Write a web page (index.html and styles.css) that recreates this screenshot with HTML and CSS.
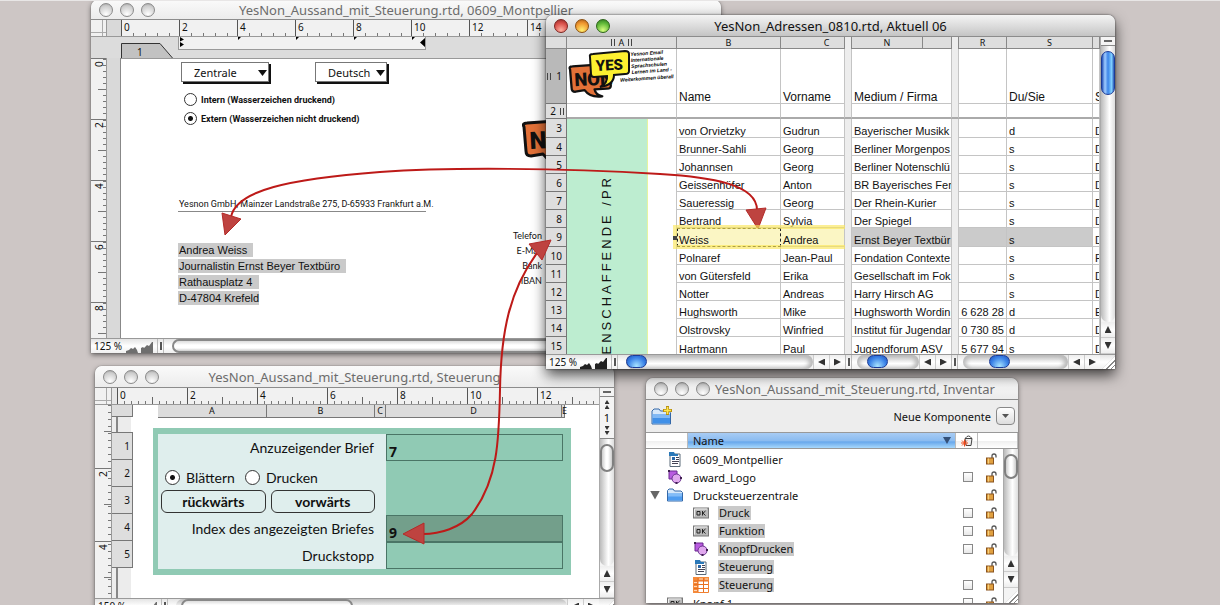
FILE: index.html
```html
<!DOCTYPE html>
<html lang="de">
<head>
<meta charset="utf-8">
<title>YesNon Aussand</title>
<link rel="stylesheet" href="styles.css">
</head>
<body>
<svg class="sprite" aria-hidden="true">
  <symbol id="hills" viewBox="0 0 28 12"><path d="M0 12V10L3 9 5 7 7 8 9 6 11 9 12 12ZM15 12V7L17 6 18 7 21 4 23 5 26 1H27V12Z"/></symbol>
  <symbol id="doc" viewBox="0 0 14 16"><path d="M2 3H12V15.500H2Z" fill="#fff" stroke="#5a6a78"/><path d="M1 1H6L7 3H10V5H1Z" fill="#2a78b8"/><path d="M4 6h3v3H4z" fill="#2a68a8"/><path d="M8 6.500h3M8 8.500h3M4 10.500h7M4 12.500h6" stroke="#445" fill="none"/></symbol>
  <symbol id="shape" viewBox="0 0 16 16"><path d="M2 2H10V10H2Z" fill="#b95be0" stroke="#6a2890"/><circle cx="9.500" cy="9.500" r="4.500" fill="#e0a8ee" stroke="#6a3090"/><path d="M1 1h2v2H1zM13 8h2v2h-2zM8.500 13h2v2h-2z" fill="#402050"/></symbol>
  <symbol id="folder" viewBox="0 0 16 13"><path d="M.5 12.500V2L2 .5H6L7.500 2.500H14L15.500 4V12.500Z" fill="#d6e8fa" stroke="#3468a8"/><path d="M1 5H15V12H1Z" fill="#4e9cf0"/><path d="M1 5H15V8H1Z" fill="#82bcf8"/></symbol>
  <symbol id="ok" viewBox="0 0 16 11"><rect x=".5" y=".5" width="15" height="10" fill="#b8b8b8" stroke="#777"/><path d="M1.500 9V1.500H14" stroke="#eee" fill="none"/><path d="M4 4H7V7.500H4ZM9.500 3.500V8M12.500 3.500L10 5.700L12.500 8" stroke="#222" fill="none"/></symbol>
  <symbol id="grid" viewBox="0 0 16 16"><path d="M.5 .5H15.500V15.500H.5Z" fill="#fff" stroke="#f08030"/><path d="M0 0H16V4H0ZM0 0H5V16H0Z" fill="#f58a3a"/><path d="M1 4H15M1 7.500H15M1 11.500H15M5 1V15M10.500 1V15" stroke="#e87020" fill="none"/><path d="M1 5.500H4M1 9.500H4M1 13.500H4M6 2H10M12 2h3" stroke="#ffd8b8" fill="none"/></symbol>
  <symbol id="lock" viewBox="0 0 11 12"><path d="M6 5V3Q6 1 8 1Q10 1 10 3V4.500" stroke="#555" stroke-width="1.300" fill="none"/><rect x=".5" y="5" width="7" height="6" fill="#e0a040" stroke="#8a5420"/><path d="M2.500 5.500V10.500" stroke="#f4d080"/></symbol>
  <symbol id="non" viewBox="0 0 60 46"><path d="M4 8Q2 4 7 4L50 1Q56 0 56 5L57 28Q58 33 52 33L36 34Q37 41 46 43Q30 45 23 35L11 37Q6 37 6 32Z" fill="#e27138" stroke="#111" stroke-width="3" stroke-linejoin="round"/><text class="logo-word" x="10" y="30" transform="rotate(-3 10 30)" font-size="24">NON</text></symbol>
</svg>

<main class="desktop">

  <section class="window win-letter" aria-label="Montpellier">
    <header class="titlebar"><div class="lights"><button aria-label="Schließen"></button><button aria-label="Ablegen"></button><button aria-label="Zoomen"></button></div><h1>YesNon_Aussand_mit_Steuerung.rtd, 0609_Montpellier</h1></header>
    <div class="ruler letter-ruler"><i class="corner"></i><i class="gutter"></i><div class="h-scale"><span>0</span><span>2</span><span>4</span><span>6</span><span>8</span><span>10</span><span>12</span><span>14</span></div></div>
    <div class="tab-row"><i class="corner-fill"></i><div class="page-tab"><svg viewBox="0 0 52 15" aria-hidden="true"><path d="M.5 15V.5H39L51.500 15" /></svg><span>1</span></div><div class="indent"><svg viewBox="0 0 248 13" aria-hidden="true"><path d="M1 0L5 2.500L1 4.500ZM1 5L5 7.500L1 10ZM59 0H62L59 3ZM117 0H120L117 3ZM175 0H178L175 3ZM233 0H236L233 3ZM246 1V10L241 5.500Z"/></svg></div></div>
    <div class="letter-body">
      <div class="v-scale v61"><span>0</span><span>2</span><span>4</span><span>6</span><span>8</span></div>
      <i class="gutter"></i>
      <div class="paper">
        <div class="letter-main">
          <div class="choices"><span class="drop zentrale"><select aria-label="Standort"><option>Zentrale</option></select></span><span class="drop"><select aria-label="Sprache"><option>Deutsch</option></select></span></div>
          <label class="mark"><input type="radio" name="mark">Intern (Wasserzeichen druckend)</label>
          <label class="mark"><input type="radio" name="mark" checked>Extern (Wasserzeichen nicht druckend)</label>
          <p class="sender">Yesnon GmbH, Mainzer Landstraße 275, D-65933 Frankfurt a.M.</p>
          <address><span>Andrea Weiss&nbsp;&nbsp;</span><span>Journalistin Ernst Beyer Textbüro&nbsp;&nbsp;</span><span>Rathausplatz 4&nbsp;&nbsp;</span><span>D-47804 Krefeld</span></address>
        </div>
        <div class="letter-side"><svg class="side-logo" role="img" aria-label="NON"><use href="#non"/></svg><ul><li>Telefon</li><li>E-Mail</li><li>Bank</li><li>IBAN</li></ul></div>
      </div>
    </div>
    <footer class="status"><span>125 %</span><svg class="hills"><use href="#hills"/></svg><i class="grab"></i><div class="track"><i class="pill"></i></div></footer>
  </section>

  <section class="window win-control" aria-label="Steuerung">
    <header class="titlebar"><div class="lights"><button aria-label="Schließen"></button><button aria-label="Ablegen"></button><button aria-label="Zoomen"></button></div><h1>YesNon_Aussand_mit_Steuerung.rtd, Steuerung</h1></header>
    <div class="control-frame">
      <div class="control-left">
        <div class="ruler control-ruler"><i class="corner"></i><i class="gutter"></i><div class="h-scale h70"><span>0</span><span>2</span><span>4</span><span>6</span><span>8</span><span>10</span><span>12</span></div></div>
        <div class="control-body">
          <div class="v-scale v73"><span></span><span>2</span><span>4</span></div>
          <div class="row-heads"><b></b><span>1</span><span>2</span><span>3</span><span>4</span><span>5</span></div>
          <div class="control-page">
            <div class="col-heads"><span>A</span><span>B</span><span>C</span><span>D</span><span>E</span></div>
            <form class="panel">
              <label class="name" for="brief">Anzuzeigender Brief</label><input class="value" id="brief" value="7">
              <div class="modes"><label><input type="radio" name="mode" checked>Blättern</label><label><input type="radio" name="mode">Drucken</label></div><i class="blank"></i>
              <div class="steps"><button type="button">rückwärts</button><button type="button">vorwärts</button></div><i class="blank"></i>
              <label class="name" for="index">Index des angezeigten Briefes</label><input class="value dark" id="index" value="9">
              <label class="name" for="stopp">Druckstopp</label><input class="value" id="stopp" value="">
            </form>
          </div>
        </div>
      </div>
      <div class="v-bar"><button class="split" aria-label="Teilen"></button><div class="pager"><button class="arrow up" aria-label="Erste Seite"></button><button class="arrow up" aria-label="Vorige Seite"></button><span>1</span><button class="arrow down" aria-label="Nächste Seite"></button><button class="arrow down" aria-label="Letzte Seite"></button></div><div class="v-track"><i class="v-thumb"></i></div><button class="arrow up" aria-label="Nach oben"></button><button class="arrow down" aria-label="Nach unten"></button></div>
    </div>
    <footer class="status"><span>150 %</span><svg class="hills"><use href="#hills"/></svg><i class="grab"></i><div class="track short"><i class="pill"></i></div><button class="arrow left" aria-label="Nach links"></button><button class="arrow right" aria-label="Nach rechts"></button><i class="grip"></i></footer>
  </section>

  <section class="window win-inventory" aria-label="Inventar">
    <header class="titlebar"><div class="lights"><button aria-label="Schließen"></button><button aria-label="Ablegen"></button><button aria-label="Zoomen"></button></div><h1>YesNon_Aussand_mit_Steuerung.rtd, Inventar</h1></header>
    <div class="toolbar"><button class="new-folder" aria-label="Neuer Ordner"><svg viewBox="0 0 22 20"><path d="M1 18V5L3 3H8L9.500 5H18L19.500 7V18Z" fill="#d6e8fa" stroke="#3468a8"/><path d="M1.500 8H19V17.500H1.500Z" fill="#4090e8"/><path d="M1.500 8H19V12H1.500Z" fill="#80b8f4"/><path d="M16.500 0V9M12 4.500H21" stroke="#b89010" stroke-width="3"/><path d="M16.500 1V8M13 4.500H20" stroke="#ffe850" stroke-width="1.500"/></svg></button><label for="newcomp">Neue Komponente</label><button id="newcomp" class="menu-button" aria-label="Neue Komponente"></button></div>
    <div class="list-head"><i></i><button class="sort">Name</button><span><svg viewBox="0 0 12 12" aria-label="Papierkorb"><path d="M4 3.500H11L10 10.500H5Z" fill="#eee" stroke="#444"/><path d="M4.500 3Q7.500 -1 10.500 3" fill="none" stroke="#444"/><path d="M0 8H7M1 5.500L6 10.500M3.500 4.500V11.500M6 5.500L1 10.500" stroke="#f04818"/></svg></span><i></i></div>
    <div class="list-body">
      <table class="tree">
        <colgroup><col><col class="c-check"><col class="c-lock"></colgroup>
        <tbody>
        <tr><td><div class="item"><svg><use href="#doc"/></svg>0609_Montpellier</div></td><td></td><td><svg class="lock"><use href="#lock"/></svg></td></tr>
        <tr><td><div class="item"><svg><use href="#shape"/></svg>award_Logo</div></td><td><input type="checkbox" aria-label="award_Logo"></td><td><svg class="lock"><use href="#lock"/></svg></td></tr>
        <tr><td><div class="item open"><button class="twist" aria-label="Zuklappen"></button><svg><use href="#folder"/></svg>Drucksteuerzentrale</div></td><td></td><td><svg class="lock"><use href="#lock"/></svg></td></tr>
        <tr><td><div class="item sub"><svg><use href="#ok"/></svg><mark>Druck</mark></div></td><td><input type="checkbox" aria-label="Druck"></td><td><svg class="lock"><use href="#lock"/></svg></td></tr>
        <tr><td><div class="item sub"><svg><use href="#ok"/></svg><mark>Funktion</mark></div></td><td><input type="checkbox" aria-label="Funktion"></td><td><svg class="lock"><use href="#lock"/></svg></td></tr>
        <tr><td><div class="item sub"><svg><use href="#shape"/></svg><mark>KnopfDrucken</mark></div></td><td><input type="checkbox" aria-label="KnopfDrucken"></td><td><svg class="lock"><use href="#lock"/></svg></td></tr>
        <tr><td><div class="item sub"><svg><use href="#doc"/></svg><mark>Steuerung</mark></div></td><td></td><td><svg class="lock"><use href="#lock"/></svg></td></tr>
        <tr><td><div class="item sub"><svg><use href="#grid"/></svg><mark>Steuerung</mark></div></td><td><input type="checkbox" aria-label="Steuerung"></td><td><svg class="lock"><use href="#lock"/></svg></td></tr>
        <tr><td><div class="item"><svg><use href="#ok"/></svg>Knopf 1</div></td><td><input type="checkbox" aria-label="Knopf 1"></td><td><svg class="lock"><use href="#lock"/></svg></td></tr>
        </tbody>
      </table>
      <div class="v-bar"><div class="v-track"><i class="v-thumb"></i></div><button class="arrow up" aria-label="Nach oben"></button><button class="arrow down" aria-label="Nach unten"></button><i class="grip"></i></div>
    </div>
  </section>

  <section class="window win-sheet active" aria-label="Adressen">
    <header class="titlebar"><div class="lights"><button class="red" aria-label="Schließen"></button><button class="amber" aria-label="Ablegen"></button><button class="green" aria-label="Zoomen"></button></div><h1>YesNon_Adressen_0810.rtd, Aktuell 06</h1></header>
    <div class="sheet-body">
      <div class="sheet-view">
      <table class="sheet">
        <colgroup><col class="w-no"><col class="w-a"><col class="w-b"><col class="w-c"><col class="w-gap"><col class="w-n"><col class="w-o"><col class="w-gap"><col class="w-r"><col class="w-s"><col class="w-t"></colgroup>
        <thead>
          <tr class="letters"><th></th><th class="picked"><i class="bars"></i>A<i class="bars"></i></th><th>B</th><th class="late">C</th><th class="gap"></th><th>N</th><th></th><th class="gap"></th><th>R</th><th>S</th><th></th></tr>
          <tr class="titles"><th class="picked"><i class="bars"></i>1</th>
            <td><svg class="logo" viewBox="0 0 109 52" role="img" aria-label="YES NON"><use href="#non" x="0" y="14" width="46" height="36"/><path d="M23 8Q22 5 26 5L58 2Q62 2 62 5L62 22Q62 25 58 25L47 26Q47 36 33 38Q41 34 40 27L27 28Q24 28 24 25Z" fill="#fdf030" stroke="#111" stroke-width="2"/><text class="logo-word" x="29" y="22" transform="rotate(-3 29 22)" font-size="15">YES</text><g class="tagline" transform="rotate(-4 64 14)"><text x="64" y="7">Yesnon Email</text><text x="64" y="13">Internationale</text><text x="64" y="19">Sprachschulen</text><text x="64" y="25">Lernen im Land -</text><text x="52" y="32">Weiterkommen überall</text></g></svg></td>
            <th>Name</th><th>Vorname</th><td class="gap"></td><th colspan="2">Medium / Firma</th><td class="gap"></td><td></td><th>Du/Sie</th><th>S</th></tr>
          <tr class="spacer"><th>2<i class="bars"></i></th><td></td><td></td><td></td><td class="gap"></td><td colspan="2"></td><td class="gap"></td><td></td><td></td><td></td></tr>
        </thead>
        <tbody>
          <tr><th>3</th><td class="group" rowspan="13"><div><span>ENSCHAFFENDE /PR</span></div></td><td>von Orvietzky</td><td>Gudrun</td><td class="gap"></td><td colspan="2">Bayerischer Musikk</td><td class="gap"></td><td></td><td>d</td><td>D</td></tr>
          <tr><th>4</th><td>Brunner-Sahli</td><td>Georg</td><td class="gap"></td><td colspan="2">Berliner Morgenpos</td><td class="gap"></td><td></td><td>s</td><td>D</td></tr>
          <tr><th>5</th><td>Johannsen</td><td>Georg</td><td class="gap"></td><td colspan="2">Berliner Notenschlü</td><td class="gap"></td><td></td><td>s</td><td>D</td></tr>
          <tr><th>6</th><td>Geissenhöfer</td><td>Anton</td><td class="gap"></td><td colspan="2">BR Bayerisches Fer</td><td class="gap"></td><td></td><td>s</td><td>D</td></tr>
          <tr><th>7</th><td>Saueressig</td><td>Georg</td><td class="gap"></td><td colspan="2">Der Rhein-Kurier</td><td class="gap"></td><td></td><td>s</td><td>D</td></tr>
          <tr><th>8</th><td>Bertrand</td><td>Sylvia</td><td class="gap"></td><td colspan="2">Der Spiegel</td><td class="gap"></td><td></td><td>s</td><td>D</td></tr>
          <tr class="current"><th>9</th><td class="cursor"><i class="glow"></i><i class="handle"></i>Weiss</td><td class="near">Andrea</td><td class="gap"></td><td class="sel" colspan="2">Ernst Beyer Textbür</td><td class="gap"></td><td class="sel"></td><td class="sel">s</td><td>D</td></tr>
          <tr><th>10</th><td>Polnaref</td><td>Jean-Paul</td><td class="gap"></td><td colspan="2">Fondation Contexte</td><td class="gap"></td><td></td><td>s</td><td>F</td></tr>
          <tr><th>11</th><td>von Gütersfeld</td><td>Erika</td><td class="gap"></td><td colspan="2">Gesellschaft im Fok</td><td class="gap"></td><td></td><td>s</td><td>D</td></tr>
          <tr><th>12</th><td>Notter</td><td>Andreas</td><td class="gap"></td><td colspan="2">Harry Hirsch AG</td><td class="gap"></td><td></td><td>s</td><td>D</td></tr>
          <tr><th>13</th><td>Hughsworth</td><td>Mike</td><td class="gap"></td><td colspan="2">Hughsworth Wordin</td><td class="gap"></td><td class="tail">6 628 28</td><td>d</td><td>E</td></tr>
          <tr><th>14</th><td>Olstrovsky</td><td>Winfried</td><td class="gap"></td><td colspan="2">Institut für Jugendar</td><td class="gap"></td><td class="tail">0 730 85</td><td>d</td><td>D</td></tr>
          <tr><th>15</th><td>Hartmann</td><td>Paul</td><td class="gap"></td><td colspan="2">Jugendforum ASV</td><td class="gap"></td><td class="tail">5 677 94</td><td>s</td><td>D</td></tr>
        </tbody>
      </table>
      </div>
      <div class="v-bar"><button class="split" aria-label="Teilen"></button><div class="v-track"><i class="v-thumb"></i></div><button class="arrow up" aria-label="Nach oben"></button><button class="arrow down" aria-label="Nach unten"></button></div>
    </div>
    <footer class="status"><div class="pane pane-1"><span>125 %</span><svg class="hills"><use href="#hills"/></svg><i class="grab"></i><div class="track"><i class="bead"></i></div><button class="arrow left" aria-label="Nach links"></button><button class="arrow right" aria-label="Nach rechts"></button></div><div class="pane pane-2"><i class="grab"></i><div class="track"><i class="bead"></i></div><button class="arrow left" aria-label="Nach links"></button><button class="arrow right" aria-label="Nach rechts"></button></div><div class="pane pane-3"><i class="grab"></i><div class="track"><i class="bead"></i></div><button class="arrow left" aria-label="Nach links"></button><button class="arrow right" aria-label="Nach rechts"></button></div><i class="grip"></i></footer>
  </section>

  <svg class="links" viewBox="0 0 1220 605" aria-hidden="true">
    <path class="wire" d="M231 217C236 190 290 179 380 172C450 167 560 168 660 174C710 177 757 184 757 210"/>
    <path class="wire" d="M537 253C510 290 501 330 500 390C499 440 498 480 472 514C460 528 440 534 423 534"/>
    <path class="head" d="M222 213L241 219L225 235ZM746 210L766 208L758 229ZM551 240L529 244L542 260ZM403 534L424 523V544Z"/>
  </svg>
</main>
</body>
</html>
```

FILE: styles.css
```css
* { box-sizing: border-box; }
body { margin: 0; font-family: "Noto Sans", sans-serif; font-size: 11px; color: #111; }
button { margin: 0; padding: 0; border: 0; background: none; font: inherit; color: inherit; }
input, select { margin: 0; font: inherit; color: inherit; }
i { font-style: normal; }
.sprite { display: none; }

.desktop { position: relative; min-height: 100vh; overflow: hidden; background: #cdc6c5; border-top: 1px solid #e8e6e6; }
.links { position: absolute; left: 0; top: -1px; width: 1220px; pointer-events: none; }
.wire { fill: none; stroke: #bd1a18; stroke-width: 2; }
.head { fill: #be4340; stroke: #b42a28; }

/* Window chrome */
.window { position: absolute; display: flex; flex-direction: column; overflow: hidden; background: #ededed; border-radius: 7px 7px 0 0; box-shadow: 0 2px 5px rgba(0, 0, 0, .5), 0 0 1px #444; }
.win-letter { left: 91px; top: -1px; width: 630px; }
.win-control { left: 95px; top: 365px; width: 519px; }
.win-inventory { left: 646px; top: 377px; width: 372px; }
.win-sheet { left: 546px; top: 14px; width: 569px; box-shadow: 0 6px 14px rgba(0, 0, 0, .7), 0 0 2px #333; }
.titlebar { position: relative; display: flex; align-items: center; justify-content: center; height: 22px; border-bottom: 1px solid #8c8c8c; background: linear-gradient(#fafafa, #ececec); }
.win-letter .titlebar { height: 20px; }
.active .titlebar { background: linear-gradient(#f4f4f4, #d8d8d8 60%, #c4c4c4); }
.titlebar h1 { margin: 0; font-size: 13px; line-height: 18px; font-weight: 400; color: #6c6c6c; white-space: nowrap; }
.active .titlebar h1 { color: #111; }
.lights { position: absolute; left: 8px; display: flex; gap: 7px; }
.lights button { width: 14px; height: 14px; border: 1px solid #8a8a8a; border-radius: 50%; background: radial-gradient(circle at 50% 85%, #fff, #ccc 70%, #999); }
.lights .red { border-color: #7c2420; background: radial-gradient(circle at 50% 85%, #ffb0a0, #d8504a 60%, #8c2824); }
.lights .amber { border-color: #8a5010; background: radial-gradient(circle at 50% 85%, #fff070, #f09830 60%, #a85818); }
.lights .green { border-color: #2c6418; background: radial-gradient(circle at 50% 85%, #d8ff80, #60b838 60%, #2c7420); }

/* Rulers */
.ruler { display: flex; height: 17px; border-bottom: 1px solid #999; background: #f1f1f1; overflow: hidden; }
.corner { width: 16px; border-right: 1px solid #999; background: linear-gradient(90deg, transparent 11px, #aaa 11px 12px, transparent 12px), linear-gradient(transparent 12px, #aaa 12px 13px, transparent 13px); }
.gutter { width: 14px; background: #d9d9d9; }
.h-scale { display: flex; flex: 1; overflow: hidden; }
.h-scale span { flex: none; width: 58px; padding-left: 2px; font-size: 10px; line-height: 14px; border-left: 1px solid #555; background: repeating-linear-gradient(90deg, transparent 0 11px, #777 11px 12px) left bottom / 56px 3px no-repeat; }
.h-scale.h70 span { width: 70px; background: repeating-linear-gradient(90deg, transparent 0 34px, #666 34px 35px) left bottom / 68px 7px no-repeat, repeating-linear-gradient(90deg, transparent 0 6px, #777 6px 7px) left bottom / 100% 3px no-repeat; }
.v-scale { width: 16px; overflow: hidden; background: #f1f1f1; border-right: 1px solid #999; }
.v-scale span { display: flex; width: 100%; height: 61px; padding: 2px 0; align-items: center; justify-content: flex-end; border-bottom: 1px solid #777; writing-mode: vertical-rl; line-height: 12px; font-size: 10px; text-align: right; transform: rotate(180deg); background: linear-gradient(#777, #777) left 29px / 8px 1px no-repeat, repeating-linear-gradient(transparent 0 5px, #777 5px 6px) left top / 3px 100% no-repeat; }
.v-scale.v73 { width: 17px; }
.v-scale.v73 span { height: 73px; background: linear-gradient(#777, #777) left 36px / 7px 1px no-repeat, repeating-linear-gradient(transparent 0 6px, #777 6px 7px) left top / 3px 100% no-repeat; }
.v73 span:first-child { margin-top: -10px; }

/* Letter */
.tab-row { display: flex; height: 21px; background: #dcdcdc; }
.corner-fill { width: 30px; }
.page-tab { position: relative; width: 57px; padding-top: 6px; text-align: left; }
.page-tab svg { display: block; width: 52px; height: 15px; fill: #c2c2c2; stroke: #333; }
.page-tab span { position: absolute; left: 16px; top: 8px; font-size: 10px; line-height: 14px; }
.indent { width: 248px; height: 13px; background: #f1f1f1; border: solid #999; border-width: 0 1px 1px; }
.indent svg { display: block; width: 248px; height: 13px; }
.letter-body { display: flex; height: 280px; }
.letter-body > .gutter { border-right: 1px solid #888; }
.paper { display: flex; flex: 1; background: #fff; border-top: 1px solid #999; }
.letter-main { width: 305px; padding: 3px 0 0 57px; }
.choices { display: flex; gap: 46px; padding-left: 3px; margin-bottom: 8px; }
.drop { position: relative; display: flex; width: 72px; height: 20px; border: 1px solid #777; background: #fff; box-shadow: 2px 2px 0 #111; }
.drop.zentrale { width: 88px; }
.drop select { width: 100%; padding: 0 12px; border: 0; background: none; appearance: none; font-size: 11px; }
.drop::after { content: ""; position: absolute; right: 1px; top: 7px; width: 9px; height: 6px; background: #111; clip-path: polygon(0 0, 100% 0, 50% 100%); pointer-events: none; }
.mark { display: flex; align-items: center; gap: 4px; height: 19px; padding-left: 6px; font-family: Roboto, sans-serif; font-size: 9px; font-weight: 700; white-space: nowrap; }
input[type="radio"] { appearance: none; flex: none; width: 13px; height: 13px; border: 1px solid #333; border-radius: 50%; background: #fff; }
input[type="radio"]:checked { background: radial-gradient(circle, #111 0 2px, #fff 3px); }
.sender { width: 248px; margin: 70px 0 31px; padding-left: 1px; font-family: Roboto, sans-serif; font-size: 9px; line-height: 13px; border-bottom: 1px solid #888; white-space: nowrap; }
address { display: flex; flex-direction: column; align-items: flex-start; gap: 2px; font: 11px/14px "Liberation Sans", sans-serif; }
address span { background: #cacaca; padding-left: 1px; }
.letter-side { display: flex; flex-direction: column; width: 116px; padding-top: 60px; }
.side-logo { width: 60px; height: 46px; margin-left: 94px; }
.letter-side ul { margin: 63px 0 0; padding: 0; list-style: none; text-align: right; font: 9px/15px Lato, sans-serif; }
.logo-word { font-family: Roboto, sans-serif; font-weight: 900; fill: #111; }

/* Bars and scrollers */
.status { display: flex; align-items: stretch; height: 15px; border-top: 1px solid #999; background: linear-gradient(#e4e4e4, #fff 50%, #f0f0f0); }
.status span { width: 35px; padding-left: 3px; font-size: 10px; line-height: 14px; white-space: nowrap; }
.hills { width: 28px; height: 12px; fill: #6e6e6e; align-self: flex-end; }
.active .hills { fill: #222; }
.grab { width: 7px; margin: 0 3px; border: solid #bbb; border-width: 0 1px; background: linear-gradient(#555, #555) center / 2px 8px no-repeat; }
.track { flex: 1; display: flex; margin-left: 5px; border-radius: 8px; background: linear-gradient(#bbb, #fff 60%, #e6e6e6); }
.pill { flex: 1; border: 2px solid #888; border-right: 0; border-radius: 8px 0 0 8px; background: linear-gradient(#ddd, #fff 40%, #fff 70%, #ccc); }
.short .pill { flex: none; width: 44%; border-right: 2px solid #888; border-radius: 8px; margin-left: 5px; }
.bead { width: 21px; height: 13px; border: 1px solid #1c3c98; border-radius: 7px; background: radial-gradient(circle at 50% 90%, #a8e4ff, #3c84e8 60%, #1c50b8); }
.pane-2 .bead { margin-left: 10px; }
.pane-3 .bead { margin-left: 26px; }
.active .track { box-shadow: inset -4px 0 4px #bbb, inset 3px 0 4px #bbb; }
.arrow { display: flex; flex: none; align-items: center; justify-content: center; width: 16px; height: 16px; border-left: 1px solid #ccc; background: linear-gradient(#eee, #fff 50%, #eee); }
.status .arrow { height: auto; }
.arrow::before { content: ""; width: 7px; height: 7px; background: #333; }
.left::before { clip-path: polygon(0 50%, 100% 0, 100% 100%); }
.right::before { clip-path: polygon(0 0, 100% 50%, 0 100%); }
.up::before { clip-path: polygon(50% 0, 100% 100%, 0 100%); }
.down::before { clip-path: polygon(0 0, 100% 0, 50% 100%); }
.v-bar { display: flex; flex: none; flex-direction: column; width: 15px; border-left: 1px solid #aaa; background: #f4f4f4; }
.v-bar .arrow { width: 100%; border-left: 0; border-bottom: 1px solid #ccc; }
.split { height: 9px; border-bottom: 1px solid #888; background: linear-gradient(#666, #666) center / 8px 2px no-repeat #f4f4f4; }
.v-track { flex: 1; padding-top: 5px; background: linear-gradient(90deg, #bbb, #fff 60%, #ddd); border-radius: 0 0 7px 7px; }
.v-thumb { display: block; height: 28px; border: 2px solid #808080; border-radius: 7px; background: linear-gradient(90deg, #ccc, #fff 40%, #fff 60%, #ccc); }
.active .v-thumb { height: 44px; border: 1px solid #1c3c98; background: linear-gradient(90deg, #2450b8, #a0ccff 25%, #3c84e8 50%, #80d0ff 80%, #2858b8); }
.grip { flex: none; width: 15px; height: 15px; background: repeating-linear-gradient(135deg, #fff 0 2px, #888 2px 3px); clip-path: polygon(100% 10%, 100% 100%, 10% 100%); }

/* Control window */
.control-frame { display: flex; height: 210px; }
.control-left { display: flex; flex-direction: column; flex: 1; min-width: 0; }
.control-ruler .corner { width: 17px; }
.control-ruler .gutter { width: 5px; background: #e8e8e8; }
.control-body { display: flex; flex: 1; min-height: 0; background: #fff; }
.row-heads { width: 21px; background: linear-gradient(90deg, #eee 4px, #888 4px 6px, #ececec 6px 19px, #fff 19px); }
.row-heads b { display: block; height: 12px; margin-bottom: 16px; background: #dcdcdc; border: solid #777; border-width: 0 1px 1px 0; }
.row-heads span { display: block; height: 27px; padding-right: 2px; text-align: right; line-height: 27px; font-size: 10px; background: #dedede; border: solid #777; border-width: 0 1px 1px 0; }
.row-heads b + span { box-shadow: 0 -1px #777; }
.control-page { flex: 1; padding-left: 20px; background: #fff; }
.col-heads { display: grid; grid-template-columns: 109px 108px 11px 176px 3px; margin-left: 5px; text-align: center; font-size: 9px; line-height: 12px; }
.col-heads span { height: 13px; background: #dcdcdc; border: solid #777; border-width: 0 1px 1px 0; }
.panel { display: grid; grid-template-columns: 228px 177px; grid-auto-rows: 27px; width: 418px; margin-top: 10px; padding: 6px 8px 6px 5px; background: #90cab4; font: 14px/27px Lato, sans-serif; }
.panel > :nth-child(odd) { background: #dfeeed; }
.name { padding-right: 12px; text-align: right; }
.value { width: 100%; height: 27px; padding: 8px 2px 0; border: 1px solid #4a7566; border-radius: 0; background: #90cab4; font: 700 14px/18px "Noto Sans", sans-serif; }
.value.dark { background: #739f8b; }
.modes { display: flex; align-items: center; gap: 10px; padding: 6px 0 0 7px; }
.modes label { display: flex; align-items: center; gap: 6px; }
.modes input[type="radio"] { width: 15px; height: 15px; }
.steps { display: flex; gap: 5px; padding: 2px 11px 2px 3px; }
.steps button { flex: 1; height: 23px; border: 1px solid #333; border-radius: 6px; font-size: 14px; font-weight: 700; line-height: 20px; }
.pager { display: flex; flex-direction: column; align-items: center; justify-content: center; height: 42px; border-bottom: 1px solid #888; line-height: 16px; }
.v-bar .pager .arrow { height: 5px; border: 0; background: none; }
.pager .arrow::before { width: 5px; height: 4px; }

/* Inventory */
.win-inventory h1 { padding-left: 46px; }
.toolbar { display: flex; align-items: center; height: 33px; padding: 0 3px 0 5px; border-bottom: 1px solid #999; font-size: 11px; }
.new-folder { width: 22px; height: 20px; margin-right: auto; }
.new-folder svg { display: block; width: 22px; height: 20px; }
.menu-button { display: flex; align-items: center; justify-content: center; width: 19px; height: 18px; margin-left: 5px; border: 1px solid #888; border-radius: 4px; background: linear-gradient(#fff, #ddd); }
.menu-button::before { content: ""; width: 7px; height: 4px; background: #555; clip-path: polygon(0 0, 100% 0, 50% 100%); }
.list-head { display: grid; grid-template-columns: 42px 1fr 22px 40px; height: 16px; border-bottom: 1px solid #999; background: linear-gradient(#fff 50%, #eee 50%, #fff); }
.list-head > * { border-right: 1px solid #bbb; }
.sort { display: flex; align-items: center; justify-content: space-between; padding: 0 4px 0 5px; line-height: 15px; background: linear-gradient(#a8ccf4, #8cbcf0 50%, #68a8ec 60%, #a8d8fc); }
.sort::after { content: ""; width: 8px; height: 7px; background: #345078; clip-path: polygon(0 0, 100% 0, 50% 100%); }
.list-head span { display: flex; align-items: center; justify-content: center; }
.list-head svg { width: 12px; height: 12px; }
.list-body { display: flex; height: 154px; overflow: hidden; background: #fff; }
.tree { flex: 1; align-self: flex-start; table-layout: fixed; border-collapse: collapse; font-size: 11px; margin-top: 1px; }
.tree tr { height: 18px; }
.tree td { padding: 0; }
.c-check { width: 23px; }
.c-lock { width: 17px; }
.item { display: flex; align-items: center; gap: 10px; height: 18px; padding-left: 21px; }
.item.open { padding-left: 4px; gap: 7px; }
.item.open svg { margin-right: 3px; }
.item.sub { padding-left: 47px; }
.item svg { width: 16px; height: 16px; }
.item mark { padding: 0 1px; margin-left: -1px; line-height: 14px; color: inherit; background: #c9c9c9; }
.twist { width: 10px; height: 9px; background: #666; clip-path: polygon(0 0, 100% 0, 50% 100%); }
.tree input { display: block; appearance: none; width: 10px; height: 10px; border: 1px solid #888; background: linear-gradient(#fff, #e8e8e8); }
.lock { display: block; width: 11px; height: 12px; }
.win-inventory .v-thumb { height: 25px; }

/* Address sheet */
.sheet-body { display: flex; height: 317px; }
.sheet-view { flex: 1; min-width: 0; overflow: hidden; }
.sheet { width: 100%; table-layout: fixed; border-collapse: separate; border-spacing: 0; background: #fff; font: 11px/12px "Liberation Sans", sans-serif; }
.w-no { width: 21px; } .w-a { width: 110px; } .w-b { width: 104px; } .w-c { width: 64px; } .w-gap { width: 7px; }
.w-n { width: 71px; } .w-o { width: 29px; } .w-r { width: 48px; } .w-s { width: 86px; } .w-t { width: 7px; }
.sheet th, .sheet td { height: inherit; padding: 2px 0 0 2px; text-align: left; vertical-align: bottom; font-weight: 400; white-space: nowrap; overflow: hidden; border: solid #c4c4c4; border-width: 0 1px 1px 0; }
.sheet tbody tr { height: 18px; }
.sheet tbody tr:nth-child(6n+1) { height: 19px; }
.sheet tr > th:first-child { padding: 0 4px 0 0; text-align: right; vertical-align: middle; font: 10px/14px "Noto Sans", sans-serif; background: #dedede; border-color: #777; }
.sheet tr.letters th { height: 12px; padding: 0; text-align: center; font: 9px/11px "Noto Sans", sans-serif; background: #dedede; border-color: #888; }
.sheet .letters .late { padding-left: 28px; }
.sheet tr .picked, .sheet tr > th.picked:first-child { background: #b9b9b9; }
.sheet tr .gap, .sheet tr.letters .gap { padding: 0; background: #ededed; border-bottom: 0; }
.titles { height: 55px; }
.titles th { font-size: 12px; line-height: 12px; }
.titles td:nth-child(2) { padding: 0; vertical-align: top; }
.spacer { height: 15px; }
.sheet .spacer td { border-bottom: 2px solid #aaa; }
.bars { display: inline-block; width: 4px; height: 7px; margin: 0 4px; border: solid #444; border-width: 0 1px; }
th:first-child .bars { margin: 0 5px 0 0; }
.sheet .spacer th:first-child { padding-right: 2px; }
.spacer th:first-child .bars { margin: 0 0 0 4px; }
.logo { display: block; width: 109px; height: 52px; }
.tagline { font: italic 700 5px "Liberation Sans", sans-serif; }
.sheet td.group { padding: 0; vertical-align: top; }
.group div { display: flex; align-items: center; flex-direction: column; width: 81px; height: 236px; padding-top: 56px; background: #bdedd0; border-right: 1px solid #e6f4a0; overflow: hidden; }
.group span { writing-mode: vertical-rl; transform: rotate(180deg); font-size: 13px; letter-spacing: 3px; }
.sheet .current td { position: relative; }
.sheet .current .cursor { z-index: 1; overflow: visible; background: #fbf6c4; border-color: transparent; outline: 1px dashed #222; outline-offset: -1px; }
.sheet .current .near { background: #fbf6c4; }
.glow { position: absolute; left: -4px; top: -3px; width: 172px; height: 24px; border: solid rgba(250, 230, 90, .65); border-width: 4px 0 4px 4px; }
.handle { position: absolute; left: -4px; top: 8px; width: 4px; height: 4px; background: #444; }
.sheet .sel { background: #cbcbcb; }
.sheet td.tail { padding: 2px 2px 0 0; text-align: right; }
.pane { display: flex; }
.pane-1 { width: 299px; }
.pane-2 { width: 106px; }
.pane-3 { flex: 1; }
.pane-2 .grab, .pane-3 .grab { margin: 0; }
.active .status span { width: 34px; }
```
